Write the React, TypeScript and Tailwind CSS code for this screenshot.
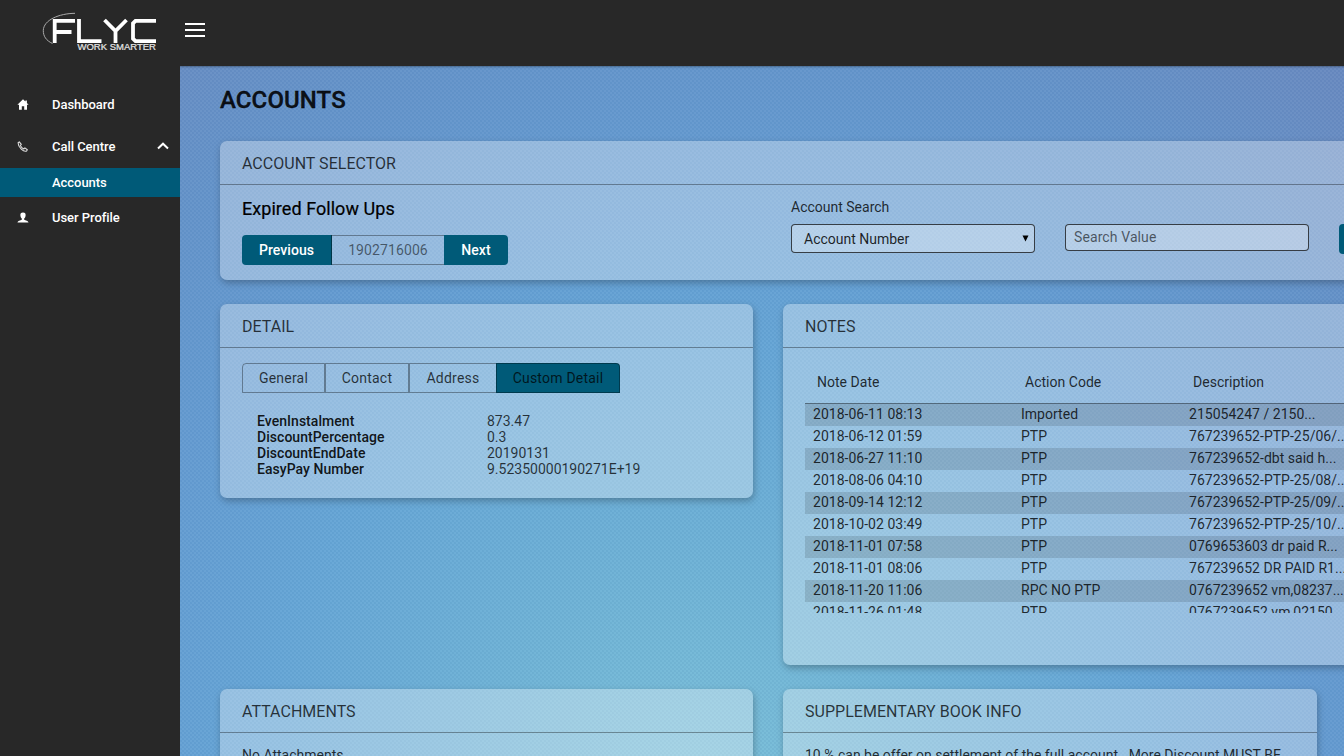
import type { ReactNode } from "react";

const notes = [
  ["2018-06-11 08:13", "Imported", "215054247 / 2150..."],
  ["2018-06-12 01:59", "PTP", "767239652-PTP-25/06/..."],
  ["2018-06-27 11:10", "PTP", "767239652-dbt said h..."],
  ["2018-08-06 04:10", "PTP", "767239652-PTP-25/08/..."],
  ["2018-09-14 12:12", "PTP", "767239652-PTP-25/09/..."],
  ["2018-10-02 03:49", "PTP", "767239652-PTP-25/10/..."],
  ["2018-11-01 07:58", "PTP", "0769653603 dr paid R..."],
  ["2018-11-01 08:06", "PTP", "767239652 DR PAID R1..."],
  ["2018-11-20 11:06", "RPC NO PTP", "0767239652 vm,08237..."],
  ["2018-11-26 01:48", "PTP", "0767239652 vm,02150..."],
];

const details = [
  ["EvenInstalment", "873.47"],
  ["DiscountPercentage", "0.3"],
  ["DiscountEndDate", "20190131"],
  ["EasyPay Number", "9.52350000190271E+19"],
];

function Panel({ title, className, children }: { title: string; className: string; children: ReactNode }) {
  return (
    <section className={`shrink-0 rounded-[7px] bg-white/32 shadow-[1px_3px_7px_rgba(0,0,0,0.26)] ${className}`}>
      <h2 className="flex h-11 items-center border-b border-black/35 px-[22px] pt-0.5 text-[16px] leading-5 tracking-[0.02px] text-black/75">
        {title}
      </h2>
      {children}
    </section>
  );
}

function Logo() {
  return (
    <svg className="h-10 w-[116px]" viewBox="0 0 116 40" fill="none">
      <path d="M33 1.3C17 1.5 1.5 8 1.3 18.5C1.2 24 4 28.5 10.5 31.5" stroke="#aaa" strokeWidth="1" />
      <path d="M12.7 31V8.9H33M12.7 20H29.5M37 7V29.1H59.5" stroke="#fff" strokeWidth="3.8" />
      <path d="M62.5 8L73.5 19L84.5 8M73.5 18.5V31M114 8.9H93.5L91 11.4V26.6L93.5 29.1H114" stroke="#fff" strokeWidth="3.8" />
      <text x="35.5" y="37.8" textLength="78.5" lengthAdjust="spacingAndGlyphs" fill="#e4e4e4" stroke="#e4e4e4" strokeWidth="0.2" fontFamily="Liberation Sans" fontSize="8.2">
        WORK SMARTER
      </text>
    </svg>
  );
}

function Sidebar() {
  return (
    <nav className="w-[180px] shrink-0 bg-[#282828] pt-[18px] text-[13px] font-medium tracking-[-0.04px] text-white">
      <div className="flex h-[42px] items-center pl-[17px]">
        <svg className="mr-[23px] size-3" viewBox="0 0 12 12" fill="#fff">
          <path d="M6 .3L.4 5.7H2v5h2.8V7.3h2.4v3.4H10v-5h1.6L9.9 4V1.6H8.4v1z" />
        </svg>
        Dashboard
      </div>
      <div className="flex h-[42px] items-center pr-[11px] pl-[17px]">
        <svg className="mr-[23px] size-3" viewBox="0 0 12 12" fill="none" stroke="#ddd" strokeWidth="1.1" strokeLinejoin="round">
          <path d="M1.1 1.8L2.3.9L4.3 3.4L3.3 4.5Q4.6 6.8 6.7 8L7.9 6.9L10.3 8.8L9.6 10C6.8 11.4 1 6.3 1.1 1.8z" />
        </svg>
        <span className="flex-1">Call Centre</span>
        <svg className="-mt-0.5 h-2 w-3" viewBox="0 0 12 8" fill="none" stroke="#fff" strokeWidth="2">
          <path d="M1 6.5L6 1.7L11 6.5" />
        </svg>
      </div>
      <div className="flex h-[29px] items-center bg-[#005a78] pl-[52px]">Accounts</div>
      <div className="flex h-[41px] items-center pl-[17px]">
        <svg className="mr-[23px] size-3" viewBox="0 0 12 12" fill="#fff">
          <path d="M6 .6C3.9.6 3.2 1.8 3.4 3.5C3.5 5 4.2 6 4.8 6.6V7.8C3.5 8.6.7 8.6.5 10.6H11.5C11.3 8.6 8.5 8.6 7.2 7.8V6.6C7.8 6 8.5 5 8.6 3.5C8.8 1.8 8.1.6 6 .6z" />
        </svg>
        User Profile
      </div>
    </nav>
  );
}

function AccountSelector() {
  return (
    <Panel title="ACCOUNT SELECTOR" className="h-[139px] w-[1216px]">
      <div className="flex pl-[22px]">
        <div className="w-[549px] shrink-0">
          <h3 className="mt-3 text-[18px] leading-6 font-normal tracking-[0.05px] text-black [-webkit-text-stroke:0.2px_black]">Expired Follow Ups</h3>
          <div className="mt-[14px] flex h-[30px] text-[14px]">
            <button className="w-[90px] rounded-l-[4px] border-r border-black/40 bg-[#005a78] font-medium tracking-[0.05px] text-white">Previous</button>
            <div className="flex w-[112px] items-center justify-center border-y border-black/35 tracking-[0.1px] text-black/55">1902716006</div>
            <button className="w-16 rounded-r-[4px] bg-[#005a78] font-medium tracking-[0.05px] text-white">Next</button>
          </div>
        </div>
        <div className="w-[244px] shrink-0">
          <label className="mt-3 block text-[14px] leading-5 text-black/80">Account Search</label>
          <div className="mt-[7px] flex h-[29px] items-center justify-between rounded-[4px] border border-black/70 bg-white/30 pr-[5px] pl-3 text-[14px] text-black/85">
            <span className="pt-[2px]">Account Number</span>
            <svg className="h-[7px] w-[7px]" viewBox="0 0 7 7">
              <path d="M.5.5H6.5L3.5 6.5z" fill="#000" />
            </svg>
          </div>
        </div>
        <input
          className="mt-[39px] ml-[30px] h-[27px] w-[244px] shrink-0 rounded-[4px] border border-black/70 bg-white/30 px-2 pb-0.5 text-[14px] tracking-[0.1px] placeholder:text-black/60"
          placeholder="Search Value"
        />
        <button className="mt-[39px] ml-[30px] h-[30px] w-20 shrink-0 rounded-[4px] bg-[#005a78]" />
      </div>
    </Panel>
  );
}

function Detail() {
  const tab = "flex h-[30px] items-center justify-center border border-black/35";
  return (
    <Panel title="DETAIL" className="h-[194px] w-[533px]">
      <div className="mt-[15px] ml-[22px] flex text-[14px] tracking-[0.22px] text-black/75">
        <div className={`${tab} w-[83px] rounded-tl-[4px]`}>General</div>
        <div className={`${tab} w-[84px]`}>Contact</div>
        <div className={`${tab} w-[87px] border-r-0`}>Address</div>
        <div className={`${tab} w-[124px] rounded-tr-[4px] bg-[#005a78]`}>Custom Detail</div>
      </div>
      <dl className="mt-5 ml-[37px] text-[14px] leading-4">
        {details.map(([name, value]) => (
          <div className="flex" key={name}>
            <dt className="w-[230px] font-medium tracking-[0.04px] text-black/90">{name}</dt>
            <dd className="text-black/75">{value}</dd>
          </div>
        ))}
      </dl>
    </Panel>
  );
}

function Notes() {
  return (
    <Panel title="NOTES" className="h-[361px] w-[653px]">
      <div className="ml-[22px] w-[610px] text-[14px] tracking-[0.02px] text-black/80">
        <div className="flex h-14 items-center border-b border-black/45 pt-[14px] pl-3">
          <span className="w-52">Note Date</span>
          <span className="w-[168px]">Action Code</span>
          <span>Description</span>
        </div>
        <div className="h-[209px] overflow-hidden">
          {notes.map(([date, code, text]) => (
            <div className="flex h-[22px] items-center pb-[2px] pl-2 whitespace-nowrap odd:bg-black/12" key={date}>
              <span className="w-52">{date}</span>
              <span className="w-[168px]">{code}</span>
              <span>{text}</span>
            </div>
          ))}
        </div>
      </div>
    </Panel>
  );
}

export default function App() {
  return (
    <div className="flex h-[756px] w-[1344px] flex-col overflow-hidden bg-[#282828] font-['Roboto',sans-serif]">
      <header className="flex h-[66px] shrink-0 items-start bg-[#282828] pt-3 pl-[42px]">
        <Logo />
        <div className="mt-[11px] ml-[27px] flex w-5 flex-col gap-1">
          <i className="h-0.5 bg-white" />
          <i className="h-0.5 bg-white" />
          <i className="h-0.5 bg-white" />
        </div>
      </header>
      <div className="flex min-h-0 flex-1">
        <Sidebar />
        <main className="min-w-0 flex-1 overflow-hidden bg-[repeating-conic-gradient(rgba(0,30,90,0.035)_0_25%,rgba(255,255,255,0.025)_0_50%),radial-gradient(circle_at_520px_730px,#7cc1d9_0,#70b3d6_220px,#66a6d6_450px,#659cd1_620px,#6594ca_780px,#698dc3_920px,#6986bd_1040px)] bg-[length:4px_4px,100%_100%] pl-10 shadow-[inset_0_3px_2px_-2px_rgba(0,0,0,0.3)]">
          <h1 className="mt-[18px] text-[24px] leading-8 font-medium tracking-[0.1px] text-black/90 [-webkit-text-stroke:0.3px_black]">ACCOUNTS</h1>
          <div className="mt-[25px] flex w-[1216px] flex-col gap-6">
            <AccountSelector />
            <div className="flex items-start gap-[30px]">
              <Detail />
              <Notes />
            </div>
            <div className="flex items-start gap-[30px]">
              <Panel title="ATTACHMENTS" className="h-[140px] w-[533px]">
                <p className="mt-3 ml-[22px] text-[14px] leading-5 text-black/80">No Attachments</p>
              </Panel>
              <Panel title="SUPPLEMENTARY BOOK INFO" className="h-[140px] w-[534px]">
                <p className="mt-3 ml-[22px] text-[14px] leading-5 whitespace-pre text-black/80">10 % can be offer on settlement of the full account.  More Discount MUST BE</p>
              </Panel>
            </div>
          </div>
        </main>
      </div>
    </div>
  );
}
